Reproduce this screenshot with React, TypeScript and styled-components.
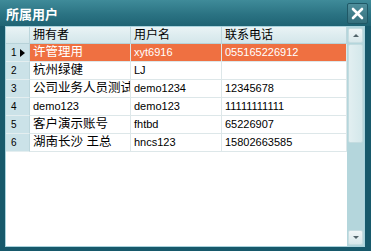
import styled, { createGlobalStyle } from "styled-components";

const GlobalStyle = createGlobalStyle`
  html, body { margin: 0; padding: 0; }
  body { background: #17596b; font-family: "Liberation Sans", "Noto Sans CJK SC", sans-serif; }
`;

const rows = [
  { owner: "许管理用", user: "xyt6916", phone: "055165226912" },
  { owner: "杭州绿健", user: "LJ", phone: "" },
  { owner: "公司业务人员测试", user: "demo1234", phone: "12345678" },
  { owner: "demo123", user: "demo123", phone: "11111111111" },
  { owner: "客户演示账号", user: "fhtbd", phone: "65226907" },
  { owner: "湖南长沙 王总", user: "hncs123", phone: "15802663585" },
];

const Window = styled.div`
  width: 371px;
  height: 251px;
  display: flex;
  flex-direction: column;
  background: #17596b;
  overflow: hidden;
`;

const TitleBar = styled.div`
  height: 26px;
  flex: none;
  display: flex;
  align-items: center;
  justify-content: space-between;
  padding: 0 3px 0 6px;
  background: linear-gradient(180deg, #3f8b99 0%, #2b7383 55%, #1f6373 100%);
`;

const Title = styled.div`
  color: #fff;
  font-size: 13px;
  font-weight: bold;
  font-family: "Noto Sans CJK SC", sans-serif;
`;

const CloseButton = styled.div`
  width: 19px;
  height: 19px;
  margin-top: 1px;
  border: 1px solid #1f5866;
  border-radius: 2px;
  background: linear-gradient(180deg, #4f8f9c 0%, #356f7c 100%);
  display: flex;
  align-items: center;
  justify-content: center;
`;

const Frame = styled.div`
  flex: 1;
  margin: 0 6px 4px 5px;
  border: 1px solid #a9d3dd;
  background: #fff;
  display: flex;
  min-height: 0;
`;

const GridArea = styled.div`
  flex: 1;
  display: flex;
  flex-direction: column;
`;

const Row = styled.div`
  display: grid;
  grid-template-columns: 24px 101px 91px 125px;
  height: ${(p) => (p.$header ? 17 : 18)}px;
  flex: none;
`;

const HeadCell = styled.div`
  background: linear-gradient(180deg, #e9f3f5 0%, #d3e6ea 100%);
  border-right: 1px solid #bcd6dc;
  border-bottom: 1px solid #b7d2d8;
  font-size: 12px;
  line-height: 16px;
  padding-left: 3px;
  color: #000;
  white-space: nowrap;
  overflow: hidden;
`;

const Indicator = styled.div`
  background: #cbe2e8;
  border-right: 1px solid #bcd6dc;
  border-bottom: 1px solid #e4eef0;
  display: flex;
  align-items: center;
  padding-left: 5px;
  gap: 3px;
  font-size: 10px;
  color: #000;
`;

const Arrow = styled.span`
  width: 0;
  height: 0;
  border-top: 4px solid transparent;
  border-bottom: 4px solid transparent;
  border-left: 5px solid #000;
`;

const Cell = styled.div`
  background: ${(p) => (p.$selected ? "#ef7041" : "#fff")};
  color: ${(p) => (p.$selected ? "#fff" : "#000")};
  border-right: 1px solid #dde7e9;
  border-bottom: 1px solid #dde7e9;
  font-size: ${(p) => (p.$cjk ? 12.5 : 11)}px;
  line-height: 17px;
  padding-left: 3px;
  white-space: nowrap;
  overflow: hidden;
`;

const ScrollBar = styled.div`
  width: 17px;
  flex: none;
  background: #b4d6dc;
  display: flex;
  flex-direction: column;
  align-items: center;
  padding: 1px 0;
`;

const ScrollButton = styled.div`
  width: 15px;
  height: 15px;
  flex: none;
  border: 1px solid #c6dde1;
  border-radius: 2px;
  background: linear-gradient(180deg, #f0f6f7 0%, #d8e8eb 100%);
  display: flex;
  align-items: center;
  justify-content: center;
  box-sizing: border-box;
`;

const Thumb = styled.div`
  width: 15px;
  height: 99px;
  margin-top: 1px;
  box-sizing: border-box;
  border: 1px solid #c3dce0;
  border-radius: 2px;
  background: linear-gradient(90deg, #e2eff1 0%, #d4e8eb 100%);
`;

const Spacer = styled.div`
  flex: 1;
`;

const TinyArrow = styled.span`
  width: 0;
  height: 0;
  border-left: 3px solid transparent;
  border-right: 3px solid transparent;
  ${(p) =>
    p.$down ? "border-top: 3px solid #52646a;" : "border-bottom: 3px solid #52646a;"}
`;

const isCjk = (s: string) => /[^\x00-\x7f]/.test(s);

export default function App() {
  return (
    <>
      <GlobalStyle />
      <Window>
        <TitleBar>
          <Title>所属用户</Title>
          <CloseButton>
            <svg width="13" height="13" viewBox="0 0 13 13">
              <path d="M2 2 L11 11 M11 2 L2 11" stroke="#fff" strokeWidth="2.6" strokeLinecap="round" />
            </svg>
          </CloseButton>
        </TitleBar>
        <Frame>
          <GridArea>
            <Row $header>
              <HeadCell />
              <HeadCell>拥有者</HeadCell>
              <HeadCell>用户名</HeadCell>
              <HeadCell>联系电话</HeadCell>
            </Row>
            {rows.map((r, i) => (
              <Row key={i}>
                <Indicator>
                  {i + 1}
                  {i === 0 && <Arrow />}
                </Indicator>
                <Cell $selected={i === 0} $cjk={isCjk(r.owner)}>{r.owner}</Cell>
                <Cell $selected={i === 0}>{r.user}</Cell>
                <Cell $selected={i === 0}>{r.phone}</Cell>
              </Row>
            ))}
          </GridArea>
          <ScrollBar>
            <ScrollButton>
              <TinyArrow />
            </ScrollButton>
            <Thumb />
            <Spacer />
            <ScrollButton>
              <TinyArrow $down />
            </ScrollButton>
          </ScrollBar>
        </Frame>
      </Window>
    </>
  );
}
